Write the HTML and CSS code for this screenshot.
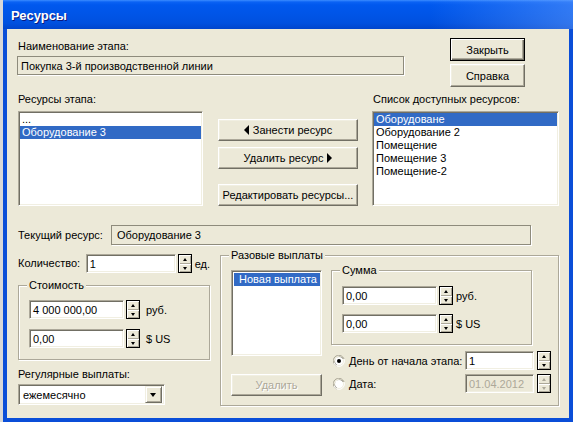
FILE: index.html
```html
<!DOCTYPE html>
<html lang="ru">
<head>
<meta charset="utf-8">
<title>Ресурсы</title>
<link rel="stylesheet" href="styles.css">
</head>
<body>
<div class="window">
  <div class="titlebar">Ресурсы</div>
  <div class="client">
    <div class="row-a">
      <div class="stage">
        <div class="lbl">Наименование этапа:</div>
        <div class="static stage-field">Покупка 3-й производственной линии</div>
      </div>
      <div class="dlg-btns">
        <div class="btn default">Закрыть</div>
        <div class="btn">Справка</div>
      </div>
    </div>

    <div class="row-b">
      <div class="lbl">Ресурсы этапа:</div>
      <div></div>
      <div class="lbl lbl-avail">Список доступных ресурсов:</div>
      <div class="list">
        <div class="item">...</div>
        <div class="item sel">Оборудование 3</div>
      </div>
      <div class="mid-btns">
        <div class="btn"><span class="tri-left"></span>Занести ресурс</div>
        <div class="btn">Удалить ресурс<span class="tri-right"></span></div>
        <div class="btn btn-edit">Редактировать ресурсы...</div>
      </div>
      <div class="list">
        <div class="item sel">Оборудоване</div>
        <div class="item">Оборудование 2</div>
        <div class="item">Помещение</div>
        <div class="item">Помещение 3</div>
        <div class="item">Помещение-2</div>
      </div>
    </div>

    <div class="row-c">
      <div class="lbl cur-lbl">Текущий ресурс:</div>
      <div class="static cur-field">Оборудование 3</div>
    </div>

    <div class="row-d">
      <div class="col-left">
        <div class="ctl-row">
          <span class="lbl qty-lbl">Количество:</span>
          <div class="edit qty-edit">1</div>
          <div class="spin"><span class="up"></span><span class="dn"></span></div>
          <span class="unit unit-qty">ед.</span>
        </div>

        <div class="group cost">
          <span class="legend">Стоимость</span>
          <div class="ctl-row">
            <div class="edit money-edit">4 000 000,00</div>
            <div class="spin"><span class="up"></span><span class="dn"></span></div>
            <span class="unit unit-cost">руб.</span>
          </div>
          <div class="ctl-row second">
            <div class="edit money-edit">0,00</div>
            <div class="spin"><span class="up"></span><span class="dn"></span></div>
            <span class="unit unit-cost">$ US</span>
          </div>
        </div>

        <div class="lbl reg-lbl">Регулярные выплаты:</div>
        <div class="combo">
          <span class="combo-text">ежемесячно</span>
          <span class="combo-btn"></span>
        </div>
      </div>

      <div class="group onetime">
        <span class="legend">Разовые выплаты</span>
        <div class="ot-left">
          <div class="list pay-list">
            <div class="item sel pay-item">Новая выплата</div>
          </div>
          <div class="btn disabled del-btn">Удалить</div>
        </div>
        <div class="ot-right">
          <div class="group sum">
            <span class="legend">Сумма</span>
            <div class="ctl-row">
              <div class="edit money-edit">0,00</div>
              <div class="spin"><span class="up"></span><span class="dn"></span></div>
              <span class="unit unit-sum">руб.</span>
            </div>
            <div class="ctl-row second">
              <div class="edit money-edit">0,00</div>
              <div class="spin"><span class="up"></span><span class="dn"></span></div>
              <span class="unit unit-sum">$ US</span>
            </div>
          </div>
          <div class="ctl-row radio-row first-radio">
            <svg class="radio" width="12" height="12" viewBox="0 0 12 12">
              <path d="M11 4 A5.5 5.5 0 1 0 4 11" fill="none" stroke="#ACA899"/>
              <path d="M10 3.5 A4.5 4.5 0 1 0 3.5 10" fill="none" stroke="#716F64"/>
              <path d="M1 8 A5.5 5.5 0 0 0 8 11 A5.5 5.5 0 0 0 11 4" fill="none" stroke="#fff"/>
              <circle cx="6" cy="6" r="4" fill="#fff"/>
              <circle cx="6" cy="6" r="2" fill="#000"/>
            </svg>
            <span class="radio-lbl">День от начала этапа:</span>
            <div class="edit day-edit">1</div>
            <div class="spin"><span class="up"></span><span class="dn"></span></div>
          </div>
          <div class="ctl-row radio-row">
            <svg class="radio" width="12" height="12" viewBox="0 0 12 12">
              <path d="M11 4 A5.5 5.5 0 1 0 4 11" fill="none" stroke="#ACA899"/>
              <path d="M10 3.5 A4.5 4.5 0 1 0 3.5 10" fill="none" stroke="#716F64"/>
              <path d="M1 8 A5.5 5.5 0 0 0 8 11 A5.5 5.5 0 0 0 11 4" fill="none" stroke="#fff"/>
              <circle cx="6" cy="6" r="4" fill="#fff"/>
            </svg>
            <span class="radio-lbl">Дата:</span>
            <div class="edit day-edit dis">01.04.2012</div>
            <div class="spin spin-dis"><span class="up"></span><span class="dn"></span></div>
          </div>
        </div>
      </div>
    </div>
  </div>
</div>
</body>
</html>
```

FILE: styles.css
```css
* { box-sizing: border-box; }

html, body {
  margin: 0;
  padding: 0;
}

body {
  width: 573px;
  height: 422px;
  overflow: hidden;
  background: #d8d8d8;
  font-family: "Liberation Sans", Arial, sans-serif;
  font-size: 11px;
  color: #000;
}

.window {
  margin-left: 3px;
  width: 570px;
  height: 422px;
  background: #0a4ed8;
  display: flex;
  flex-direction: column;
  padding: 0 4px 4px 4px;
}

.titlebar {
  height: 29px;
  margin: 0 -4px;
  padding-left: 8px;
  padding-top: 2px;
  display: flex;
  align-items: center;
  color: #fff;
  font-weight: bold;
  font-size: 13px;
  text-shadow: 1px 1px 0 #0a1a80;
  background:
    linear-gradient(to right, rgba(255,255,255,0) 75%, rgba(110,165,255,0.45) 100%),
    linear-gradient(to bottom, #3b8cff 0, #0a62f4 2px, #0058ee 5px, #0055e8 45%, #0050df 80%, #0045cc 100%);
}

.client {
  flex: 1;
  background: #ece9d8;
  display: flex;
  flex-direction: column;
}

.lbl {
  line-height: 13px;
  height: 13px;
  white-space: nowrap;
}

/* ---------- common controls ---------- */
.btn {
  height: 23px;
  background: #ece9d8;
  border: 1px solid;
  border-color: #fff #716f64 #716f64 #fff;
  box-shadow: inset -1px -1px 0 #aca899, inset 1px 1px 0 #f1efe2;
  display: flex;
  align-items: center;
  justify-content: center;
  white-space: nowrap;
}

.btn.default {
  border: 1px solid #000;
  box-shadow: inset 1px 1px 0 #fff, inset -1px -1px 0 #716f64, inset -2px -2px 0 #aca899;
}

.btn.disabled {
  color: #aca899;
  text-shadow: 1px 1px 0 #fff;
}

.static {
  height: 19px;
  border: 1px solid #8e8b7c;
  box-shadow: 1px 1px 0 #fff;
  padding-left: 3px;
  display: flex;
  align-items: center;
  white-space: nowrap;
}

.edit {
  height: 19px;
  background: #fff;
  border: 1px solid;
  border-color: #aca899 #fff #fff #aca899;
  box-shadow: inset 1px 1px 0 #716f64, inset -1px -1px 0 #f1efe2;
  padding-left: 3px;
  display: flex;
  align-items: center;
  white-space: nowrap;
}

.edit.dis {
  background: #ece9d8;
  color: #aca899;
}

.list {
  background: #fff;
  border: 1px solid;
  border-color: #aca899 #fff #fff #aca899;
  box-shadow: inset 1px 1px 0 #716f64, inset -1px -1px 0 #f1efe2;
  padding: 1px;
  height: 95px;
}

.item {
  line-height: 13px;
  height: 13px;
  padding-left: 2px;
  white-space: nowrap;
}

.item.sel {
  background: #316ac5;
  color: #fff;
}

.spin {
  width: 14px;
  height: 19px;
  border: 1px solid #000;
  display: flex;
  flex-direction: column;
  background: #ece9d8;
}

.spin span {
  flex: 1;
  position: relative;
  box-shadow: inset 1px 1px 0 #fff, inset -1px -1px 0 #aca899;
}

.spin span::after {
  content: "";
  position: absolute;
  left: 4px;
  width: 0;
  height: 0;
  border-left: 2.5px solid transparent;
  border-right: 2.5px solid transparent;
}

.spin .up::after {
  top: 3px;
  border-bottom: 3px solid #000;
}

.spin .dn::after {
  top: 3px;
  border-top: 3px solid #000;
}

.spin-dis .up::after { border-bottom-color: #aca899; }
.spin-dis .dn::after { border-top-color: #aca899; }

.ctl-row {
  display: flex;
  align-items: center;
  height: 19px;
}

.ctl-row .spin { margin-left: 2px; }

.unit { white-space: nowrap; }

.group {
  position: relative;
  border: 1px solid #aca899;
  box-shadow: inset 1px 1px 0 #fff, 1px 1px 0 #fff;
}

.legend {
  position: absolute;
  top: -7px;
  left: 8px;
  padding: 0 2px;
  background: #ece9d8;
  line-height: 13px;
  white-space: nowrap;
}

/* ---------- row A ---------- */
.row-a {
  display: flex;
  padding-left: 10px;
}

.stage {
  width: 387px;
  padding-top: 11px;
}

.stage .lbl { padding-left: 1px; }

.stage-field {
  margin-top: 3px;
}

.dlg-btns {
  margin-left: 46px;
  padding-top: 9px;
  width: 75px;
  display: flex;
  flex-direction: column;
  gap: 3px;
}

/* ---------- row B ---------- */
.row-b {
  margin-top: 6px;
  padding-left: 11px;
  display: grid;
  grid-template-columns: 185px 140px 186px;
  grid-template-rows: 13px 95px;
  column-gap: 15px;
  row-gap: 5px;
}

.row-b > .list:last-child { margin-left: -1px; }

.lbl-avail { margin-left: 0; }

.mid-btns {
  padding-top: 8px;
  display: flex;
  flex-direction: column;
}

.mid-btns .btn + .btn { margin-top: 6px; }
.mid-btns .btn-edit { margin-top: 15px !important; }

.tri-left {
  width: 0;
  height: 0;
  border-top: 5px solid transparent;
  border-bottom: 5px solid transparent;
  border-right: 5px solid #000;
  margin-right: 4px;
}

.tri-right {
  width: 0;
  height: 0;
  border-top: 5px solid transparent;
  border-bottom: 5px solid transparent;
  border-left: 5px solid #000;
  margin-left: 4px;
}

/* ---------- row C ---------- */
.row-c {
  margin-top: 19px;
  padding-left: 11px;
  display: flex;
  align-items: center;
}

.cur-lbl { width: 93px; }

.cur-field {
  width: 420px;
  height: 20px;
  padding-left: 5px;
}

/* ---------- row D ---------- */
.row-d {
  margin-top: 9px;
  padding-left: 11px;
  display: flex;
  align-items: flex-start;
}

.col-left {
  width: 192px;
  display: flex;
  flex-direction: column;
}

.qty-lbl { width: 68px; }
.qty-edit { width: 90px; }
.unit-qty { margin-left: 3px; }

.cost {
  margin-top: 12px;
  width: 192px;
  height: 75px;
  padding: 14px 0 0 10px;
}

.second { margin-top: 10px; }

.money-edit { width: 95px; }
.unit-cost { margin-left: 6px; }
.unit-sum { margin-left: 3px; }

.reg-lbl {
  margin-top: 8px;
}

.combo {
  margin-top: 3px;
  width: 147px;
  height: 21px;
  background: #fff;
  border: 1px solid;
  border-color: #aca899 #fff #fff #aca899;
  box-shadow: inset 1px 1px 0 #716f64, inset -1px -1px 0 #f1efe2;
  display: flex;
  align-items: center;
  padding: 2px 2px 2px 4px;
}

.combo-text { flex: 1; }

.combo-btn {
  width: 17px;
  height: 17px;
  background: #ece9d8;
  border: 1px solid;
  border-color: #f1efe2 #716f64 #716f64 #f1efe2;
  box-shadow: inset 1px 1px 0 #fff, inset -1px -1px 0 #aca899;
  position: relative;
}

.combo-btn::after {
  content: "";
  position: absolute;
  left: 4px;
  top: 6px;
  border-left: 3.5px solid transparent;
  border-right: 3.5px solid transparent;
  border-top: 4px solid #000;
}

.onetime {
  margin-left: 10px;
  margin-top: 1px;
  width: 339px;
  height: 151px;
  padding: 14px 0 0 10px;
  display: flex;
  align-items: flex-start;
}

.ot-left {
  width: 91px;
  display: flex;
  flex-direction: column;
}

.pay-list {
  height: 86px;
  padding: 2px 1px 1px 2px;
}

.pay-item { padding-left: 5px; }

.del-btn {
  margin-top: 18px;
  height: 22px;
}

.ot-right {
  margin-left: 9px;
  display: flex;
  flex-direction: column;
}

.sum {
  width: 201px;
  height: 75px;
  padding: 15px 0 0 10px;
}

.sum .second { margin-top: 9px; }

.radio-row {
  padding-left: 2px;
}

.first-radio { margin-top: 6px; }
.radio-row + .radio-row { margin-top: 4px; }

.radio { flex: none; }

.radio-lbl {
  margin-left: 4px;
  width: 116px;
  white-space: nowrap;
}

.day-edit { width: 69px; }
.radio-row .spin { margin-left: 3px; }
```
